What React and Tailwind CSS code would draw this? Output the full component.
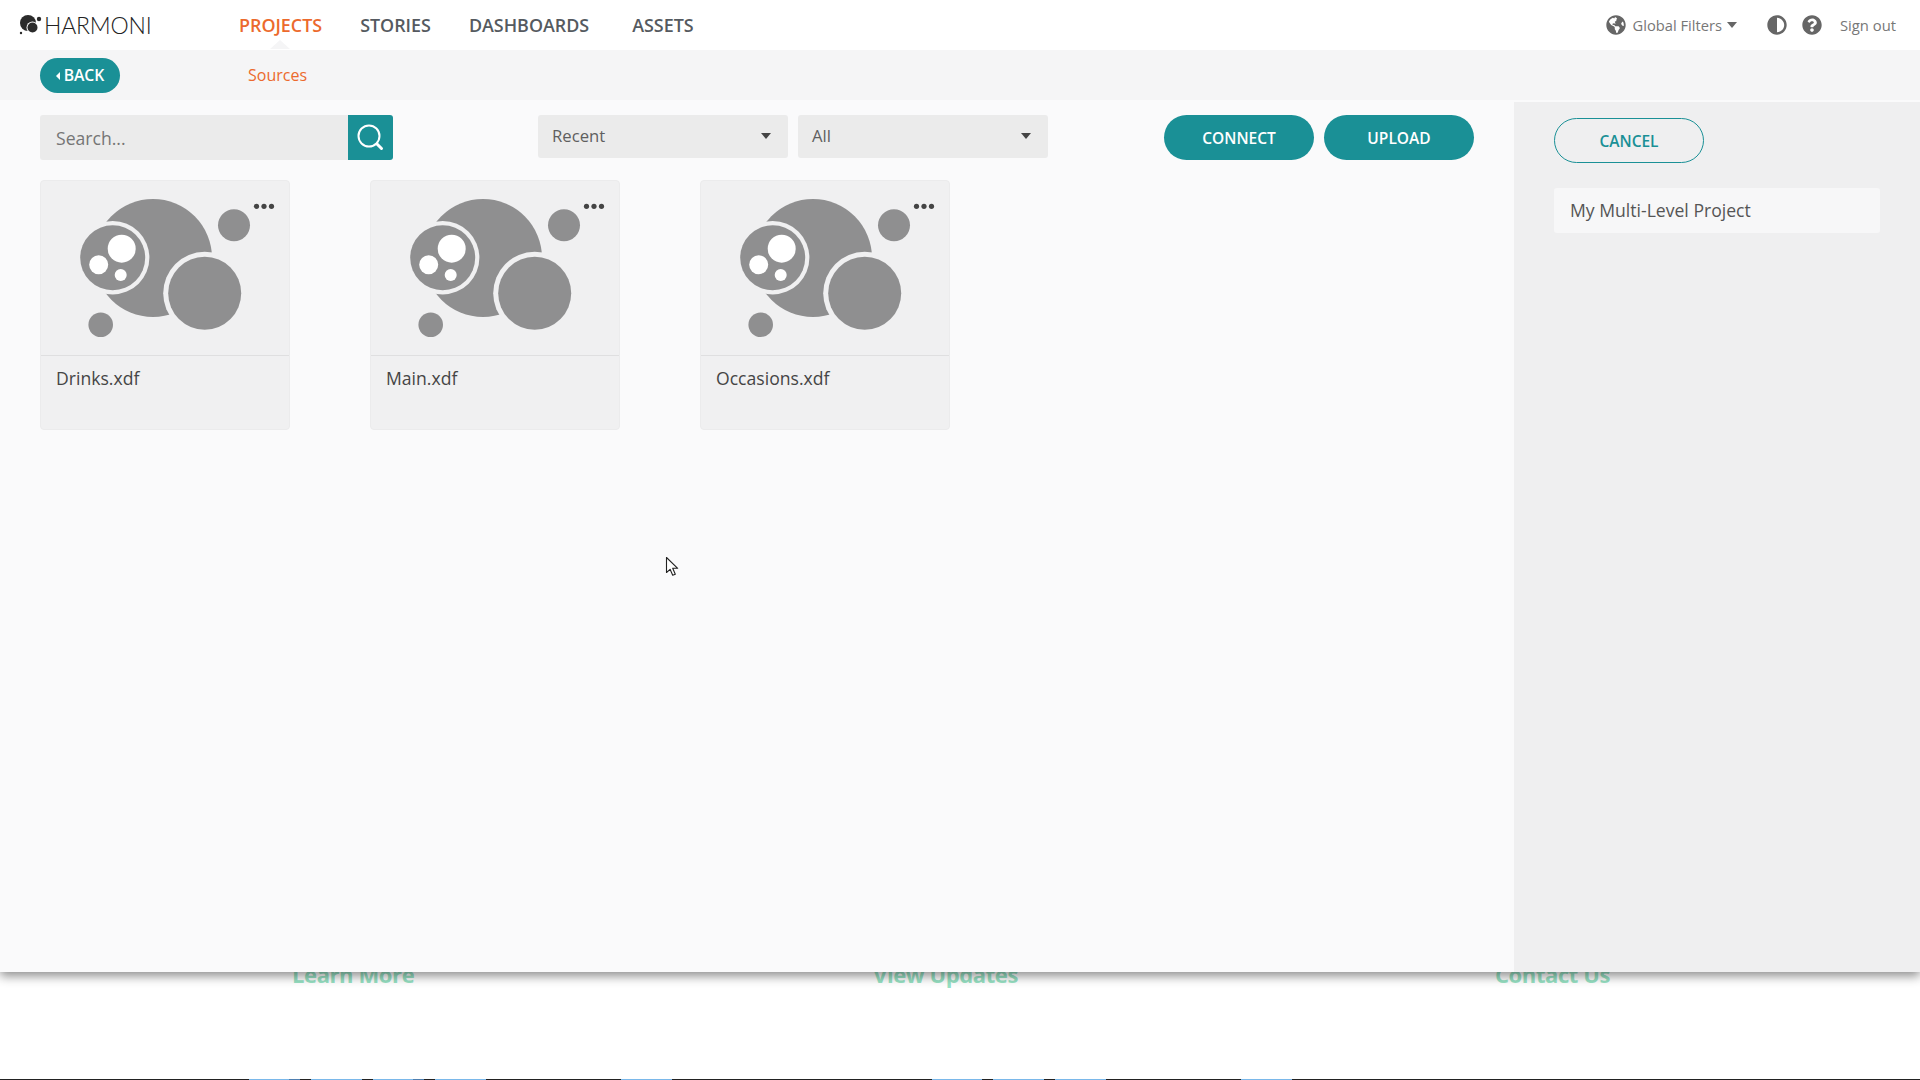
import { FaGlobeAmericas, FaAdjust, FaQuestionCircle } from "react-icons/fa";

const FONT = "font-['Open_Sans',sans-serif]";

function Bubbles() {
  return (
    <svg viewBox="0 0 250 175" className="block w-[250px] h-[175px]">
      <circle cx="113" cy="78" r="59" fill="#8f8f90" />
      <circle cx="72.7" cy="77.7" r="36.7" fill="#f0f0f1" />
      <circle cx="72.7" cy="77.7" r="32.5" fill="#8f8f90" />
      <circle cx="81.7" cy="68.7" r="14" fill="#ffffff" />
      <circle cx="58.7" cy="84.7" r="9.5" fill="#ffffff" />
      <circle cx="80.7" cy="95" r="6" fill="#ffffff" />
      <circle cx="164.7" cy="113.3" r="41.5" fill="#f0f0f1" />
      <circle cx="164.7" cy="113.3" r="36.5" fill="#8f8f90" />
      <circle cx="194" cy="45.3" r="16" fill="#8f8f90" />
      <circle cx="60.7" cy="144.7" r="12.3" fill="#8f8f90" />
      <circle cx="216.5" cy="26.3" r="2.6" fill="#444" />
      <circle cx="224" cy="26.3" r="2.6" fill="#444" />
      <circle cx="231.5" cy="26.3" r="2.6" fill="#444" />
    </svg>
  );
}

function Card({ name }) {
  return (
    <div className="w-[250px] h-[250px] bg-[#f0f0f1] rounded-[4px] border border-[#ebebec] box-border overflow-hidden">
      <div className="h-[175px] -m-px border-b border-[#dfdfe0] box-content">
        <Bubbles />
      </div>
      <div className="pl-[15px] pt-[10px] text-[17.6px] leading-[26px] text-[#454545]">{name}</div>
    </div>
  );
}

function Caret({ className }) {
  return <span className={`inline-block w-0 h-0 border-l-[5px] border-r-[5px] border-t-[6px] border-l-transparent border-r-transparent ${className}`} />;
}

function Select({ label }) {
  return (
    <div className="w-[250px] h-[43px] bg-[#ebebeb] rounded-[3px] pl-[14px] pr-[17px] pb-[2px] flex items-center justify-between text-[16.7px] text-[#5f5f5f]">
      <span>{label}</span>
      <Caret className="border-t-[#444]" />
    </div>
  );
}

function TealButton({ children }) {
  return (
    <button className="w-[150px] h-[45px] pt-[3px] rounded-full bg-[#1a9096] text-white text-[15.5px] font-semibold">{children}</button>
  );
}

function NavItem({ children, active, className = "" }) {
  return (
    <a className={`text-[17.9px] font-semibold ${active ? "text-[#ec6a2d]" : "text-[#555a60]"} ${className}`}>{children}</a>
  );
}

function Logo() {
  return (
    <div className="flex items-center">
      <svg viewBox="0 0 24 22" className="w-[24px] h-[22px] -ml-[1px]">
        <circle cx="9" cy="9" r="8" fill="#2b2b2b" />
        <circle cx="13.5" cy="13.5" r="6" fill="#fff" />
        <circle cx="13.5" cy="13.5" r="5" fill="#2b2b2b" />
        <circle cx="20" cy="5" r="2.2" fill="#2b2b2b" />
        <circle cx="2" cy="19" r="1.2" fill="#2b2b2b" />
      </svg>
      <span className="ml-[1px] font-['Lato',sans-serif] font-light text-[23px] leading-none tracking-[-0.2px] text-[#222]">HARMONI</span>
    </div>
  );
}

function FooterLink({ children, className }) {
  return <a className={`absolute top-[-14px] text-[22px] font-bold tracking-[-0.4px] text-[#98e2c4] ${className}`}>{children}</a>;
}

const LIGHT = [[249, 40], [311, 51], [373, 40], [435, 51], [621, 51], [932, 50], [993, 51], [1055, 51], [1241, 51]];
const DARK = [[289, 11], [413, 11]];

export default function App() {
  return (
    <div className={`w-[1920px] h-[1080px] overflow-hidden flex flex-col bg-white ${FONT}`}>
      <div className="relative z-10 h-[972px] flex flex-col shadow-[0_4px_10px_rgba(0,0,0,0.45)] bg-[#fafafb]">
        <header className="h-[50px] bg-white flex items-center pl-[20px] pr-[24px]">
          <div className="w-[219px]"><Logo /></div>
          <nav className="flex items-center">
            <div className="relative">
              <NavItem active>PROJECTS</NavItem>
              <span className="absolute left-[31px] top-[28px] w-0 h-0 border-l-[10px] border-r-[10px] border-b-[9px] border-l-transparent border-r-transparent border-b-[#f5f5f6]" />
            </div>
            <NavItem className="ml-[38px]">STORIES</NavItem>
            <NavItem className="ml-[38px]">DASHBOARDS</NavItem>
            <NavItem className="ml-[43px]">ASSETS</NavItem>
          </nav>
          <div className="ml-auto flex items-center text-[15px] text-[#6f6f6f]">
            <FaGlobeAmericas className="w-[20px] h-[20px] text-[#666]" />
            <span className="ml-[7px] text-[14.7px] font-medium text-[#777] pt-[1px]">Global Filters</span>
            <Caret className="ml-[5px] border-t-[#666]" />
            <FaAdjust className="ml-[30px] w-[20px] h-[20px] text-[#666]" />
            <FaQuestionCircle className="ml-[15px] w-[20px] h-[20px] text-[#666]" />
            <span className="ml-[18px] text-[14.8px] font-medium text-[#777]">Sign out</span>
          </div>
        </header>

        <div className="h-[50px] bg-[#f5f5f6] flex items-center pl-[40px]">
          <button className="w-[80px] h-[35px] pt-[1px] rounded-full bg-[#1a9096] text-white text-[15.7px] font-semibold flex items-center justify-center">
            <span className="mr-[4px] w-0 h-0 border-t-[4px] border-b-[4px] border-r-[4px] border-t-transparent border-b-transparent border-r-white" />
            BACK
          </button>
          <span className="ml-[128px] text-[16px] text-[#ec6a2d]">Sources</span>
        </div>

        <div className="flex-1 flex min-h-0">
          <main className="w-[1514px] pl-[40px] pt-[15px]">
            <div className="flex items-start">
              <div className="w-[308px] h-[45px] bg-[#ebebeb] rounded-l-[3px] pl-[16px] pt-[1px] flex items-center text-[17.6px] text-[#757575]">Search...</div>
              <div className="w-[45px] h-[45px] bg-[#1a9096] rounded-r-[3px] flex items-center justify-center">
                <svg viewBox="0 0 28 28" className="w-[28px] h-[28px]" fill="none" stroke="#fff">
                  <circle cx="12" cy="12" r="10.5" strokeWidth="2" />
                  <path d="M20 20l4.5 4.5" strokeWidth="3" strokeLinecap="round" />
                </svg>
              </div>
              <div className="ml-[145px] flex gap-[10px]">
                <Select label="Recent" />
                <Select label="All" />
              </div>
              <div className="ml-[116px] flex gap-[10px]">
                <TealButton>CONNECT</TealButton>
                <TealButton>UPLOAD</TealButton>
              </div>
            </div>
            <div className="mt-[20px] flex gap-[80px]">
              <Card name="Drinks.xdf" />
              <Card name="Main.xdf" />
              <Card name="Occasions.xdf" />
            </div>
          </main>
          <aside className="flex-1 bg-[#efeff0] mt-[2px] pl-[40px] pr-[40px] pt-[16px]">
            <button className="w-[150px] h-[45px] pt-[2px] rounded-full border border-[#1a9096] text-[#1a9096] text-[15.5px] font-semibold">CANCEL</button>
            <div className="mt-[25px] h-[45px] bg-[#f7f7f8] rounded-[3px] pl-[16px] flex items-center text-[17.6px] text-[#555]">My Multi-Level Project</div>
          </aside>
        </div>

        {/* Cursor over the page */}
        <svg viewBox="0 0 14 22" className="absolute left-[665px] top-[556px] w-[14px] h-[22px]">
          <path d="M1.5 1.5v15l3.6-3.2 2.6 6 2.6-1.1-2.6-5.9h5z" fill="#fff" stroke="#222" strokeWidth="1.1" strokeLinejoin="round" />
        </svg>
      </div>

      <footer className="relative flex-1 bg-white">
        <FooterLink className="left-[292px]">Learn More</FooterLink>
        <FooterLink className="left-[873px]">View Updates</FooterLink>
        <FooterLink className="left-[1495px]">Contact Us</FooterLink>
        <div className="absolute left-0 right-0 bottom-0 h-[1px] bg-[#222]">
          {LIGHT.map(([x, w]) => (
            <span key={x} className="absolute top-0 h-[1px] bg-[#7ab8ea]" style={{ left: x, width: w }} />
          ))}
          {DARK.map(([x, w]) => (
            <span key={x} className="absolute top-0 h-[1px] bg-[#4f7fb0]" style={{ left: x, width: w }} />
          ))}
        </div>
      </footer>
    </div>
  );
}
